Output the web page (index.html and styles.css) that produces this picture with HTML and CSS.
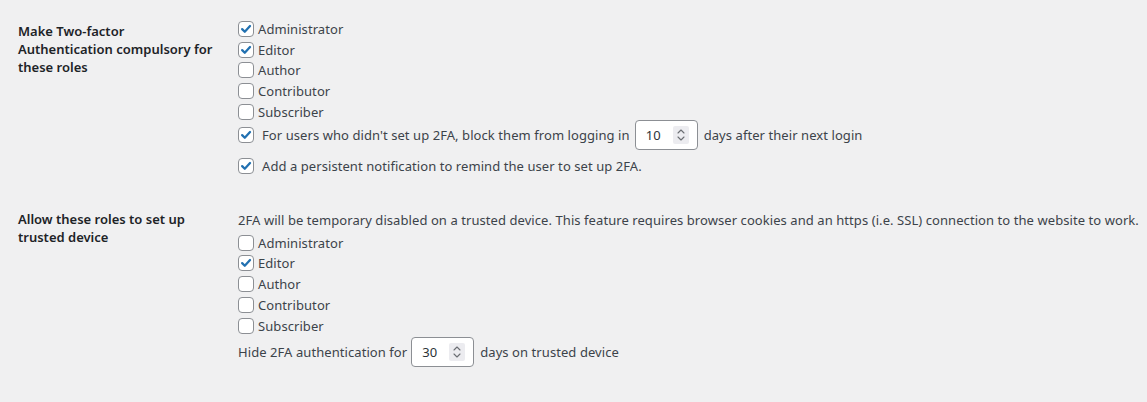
FILE: index.html
```html
<!DOCTYPE html>
<html lang="en">
<head>
<meta charset="utf-8">
<title>Two-factor settings</title>
<link rel="stylesheet" href="styles.css">
</head>
<body>
<div class="wrap">
  <table class="form-table">
    <tr class="row row-first">
      <th class="label-cell">Make Two-factor Authentication compulsory for these roles</th>
      <td class="field-cell">
        <label class="role"><span class="cb checked"><svg viewBox="0 0 16 16"><path d="M3.6 8.2 L6.6 11.2 L12.6 4.6" /></svg></span>Administrator</label>
        <label class="role"><span class="cb checked"><svg viewBox="0 0 16 16"><path d="M3.6 8.2 L6.6 11.2 L12.6 4.6" /></svg></span>Editor</label>
        <label class="role"><span class="cb"></span>Author</label>
        <label class="role"><span class="cb"></span>Contributor</label>
        <label class="role"><span class="cb"></span>Subscriber</label>
        <div class="inline-row block-row">
          <span class="cb checked"><svg viewBox="0 0 16 16"><path d="M3.6 8.2 L6.6 11.2 L12.6 4.6" /></svg></span>
          <span class="wide-text">For users who didn't set up 2FA, block them from logging in</span>
          <span class="num-input"><span class="num-val">10</span><span class="spin"><svg viewBox="0 0 16 18"><path d="M5 7 L8 4 L11 7 M5 11 L8 14 L11 11" /></svg></span></span>
          <span>days after their next login</span>
        </div>
        <div class="inline-row notify-row">
          <span class="cb checked"><svg viewBox="0 0 16 16"><path d="M3.6 8.2 L6.6 11.2 L12.6 4.6" /></svg></span>
          <span class="wide-text">Add a persistent notification to remind the user to set up 2FA.</span>
        </div>
      </td>
    </tr>
    <tr class="row row-second">
      <th class="label-cell">Allow these roles to set up trusted device</th>
      <td class="field-cell">
        <p class="description">2FA will be temporary disabled on a trusted device. This feature requires browser cookies and an https (i.e. SSL) connection to the website to work.</p>
        <label class="role"><span class="cb"></span>Administrator</label>
        <label class="role"><span class="cb checked"><svg viewBox="0 0 16 16"><path d="M3.6 8.2 L6.6 11.2 L12.6 4.6" /></svg></span>Editor</label>
        <label class="role"><span class="cb"></span>Author</label>
        <label class="role"><span class="cb"></span>Contributor</label>
        <label class="role"><span class="cb"></span>Subscriber</label>
        <div class="inline-row hide-row">
          <span>Hide 2FA authentication for</span>
          <span class="num-input"><span class="num-val">30</span><span class="spin"><svg viewBox="0 0 16 18"><path d="M5 7 L8 4 L11 7 M5 11 L8 14 L11 11" /></svg></span></span>
          <span>days on trusted device</span>
        </div>
      </td>
    </tr>
  </table>
</div>
</body>
</html>
```
FILE: styles.css
```css
html, body {
  margin: 0;
  padding: 0;
  background: #f0f0f1;
}
body {
  font-family: "Noto Sans", "Open Sans", sans-serif;
  font-size: 13px;
  letter-spacing: 0.07px;
  color: #3c434a;
}
.wrap {
  padding: 2px 0 0 18px;
}
.form-table {
  border-collapse: collapse;
}
.label-cell {
  width: 200px;
  min-width: 200px;
  padding: 20px 10px 20px 0;
  text-align: left;
  vertical-align: top;
  font-weight: 600;
  letter-spacing: 0;
  color: #1d2327;
  line-height: 18px;
}
.field-cell {
  padding: 16.5px 0 15px 10px;
  vertical-align: top;
  line-height: 18px;
}
.row-second .label-cell {
  padding-top: 19px;
}
.row-second .field-cell {
  padding-top: 20px;
}
.role {
  display: flex;
  align-items: center;
  height: 20.75px;
}
.cb {
  box-sizing: border-box;
  width: 16px;
  height: 16px;
  border: 1px solid #8c8f94;
  border-radius: 4px;
  background: #fff;
  margin-right: 4px;
  display: inline-flex;
  align-items: center;
  justify-content: center;
  flex: none;
}
.cb svg {
  width: 16px;
  height: 16px;
  fill: none;
  stroke: #2271b1;
  stroke-width: 2.6;
  stroke-linecap: round;
  stroke-linejoin: round;
}
.inline-row {
  display: flex;
  align-items: center;
  white-space: nowrap;
}
.block-row {
  height: 30px;
  margin-top: -2px;
}
.block-row .wide-text,
.notify-row .wide-text {
  margin-left: 4px;
}
.notify-row {
  height: 20px;
  margin-top: 6px;
}
.num-input {
  box-sizing: border-box;
  display: inline-flex;
  align-items: center;
  justify-content: space-between;
  width: 63px;
  height: 30px;
  border: 1px solid #8c8f94;
  border-radius: 4px;
  background: #fff;
  margin: 0 6px 0 5px;
  padding: 0 8px 0 10px;
  color: #2c3338;
  font-size: 13px;
}
.spin {
  width: 16px;
  height: 18px;
  background: #ececf0;
  border-radius: 2px;
  display: inline-flex;
}
.spin svg {
  width: 16px;
  height: 18px;
  fill: none;
  stroke: #6b6e73;
  stroke-width: 1.1;
  stroke-linecap: round;
  stroke-linejoin: round;
}
.description {
  margin: 0 0 3px 0;
  white-space: nowrap;
}
.hide-row {
  height: 30px;
  margin-top: 1px;
}
.hide-row .num-input {
  margin: 0 6px 0 4px;
}
```
